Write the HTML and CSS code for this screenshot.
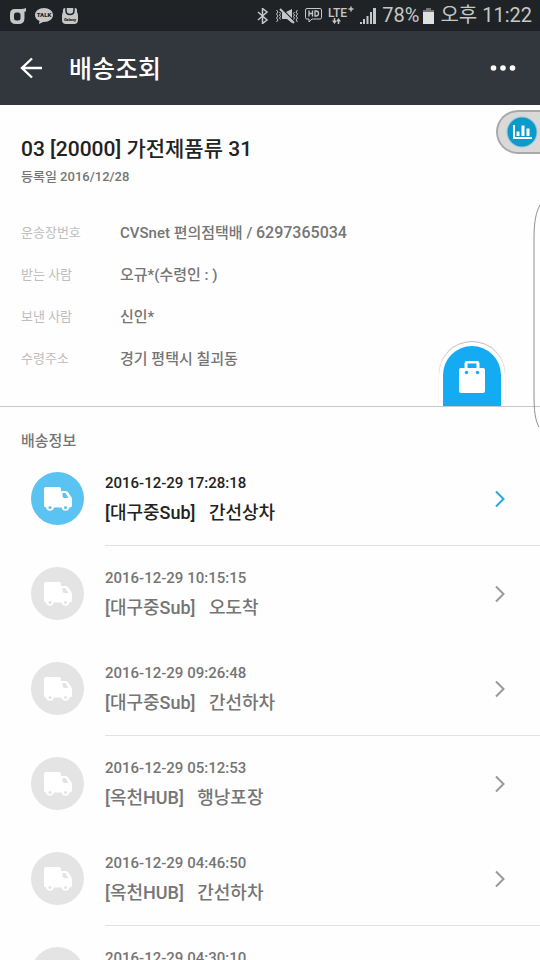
FILE: index.html
```
<!DOCTYPE html>
<html lang="ko">
<head>
<meta charset="utf-8">
<meta name="viewport" content="width=device-width, initial-scale=1">
<title>배송조회</title>
<link rel="stylesheet" href="styles.css">
</head>
<body>
<svg class="defs" aria-hidden="true">
  <symbol id="truck" viewBox="0 0 28 24">
    <path fill="currentColor" d="M2 0h13q2 0 2 2v2h4.500q1.500 0 2.500 1.200l3 4.300q1 1.500 1 3V18q0 2.500-2.500 2.500H2.500Q0 20.500 0 18V2q0-2 2-2z"/>
    <path class="truck-cut" d="M18.500 6h3l3 5h-4q-2 0-2-2z"/>
    <circle cx="6" cy="20" r="3.800" fill="currentColor"/>
    <circle cx="21.500" cy="20" r="3.800" fill="currentColor"/>
    <circle class="truck-cut" cx="6" cy="20.500" r="1.500"/>
    <circle class="truck-cut" cx="21.500" cy="20.500" r="1.500"/>
  </symbol>
  <symbol id="chevron" viewBox="0 0 12 18">
    <path d="M2 1.500l7.500 7.500L2 16.500" fill="none" stroke="currentColor" stroke-width="2"/>
  </symbol>
</svg>

<div class="status">
  <div class="status-group">
    <svg width="16" height="16" viewBox="0 0 16 16"><path d="M16 0v3.500h-1.500V10q0 6-6 6H6q-6 0-6-6V6q0-5 5-5h6q3 0 5-1zM6.500 4.500Q4 4.500 4 7v3q0 2.500 2.500 2.500H8q2.500 0 2.500-2.500V7q0-2.500-2.500-2.500z" fill="#c6c8c8" fill-rule="evenodd"/></svg>
    <svg width="18" height="16" viewBox="0 0 18 16"><path d="M9 0c5 0 9 3 9 7s-4 7-9 7l-1-.1L4 16l.5-3C2 12 0 9.700 0 7c0-4 4-7 9-7z" fill="#c6c8c8"/><text x="9" y="9" class="talk">TALK</text></svg>
    <svg width="16" height="16" viewBox="0 0 16 16"><path d="M3 0h10q2 0 2 2v2q1 1.500 1 4v4q0 4-4 4H4q-4 0-4-4V8q0-2.500 1-4V2q0-2 2-2z" fill="#c6c8c8"/><path d="M4 0v2.500q0 4 4 4t4-4V0" fill="none" stroke="#1f2325" stroke-width="1.500"/><text x="8" y="13" class="shop">Galaxy</text></svg>
  </div>
  <div class="status-group status-right">
    <svg width="12" height="16" viewBox="0 0 12 16"><path d="M1 4l9 8-4.500 3.500v-15L10 4l-9 8" fill="none" stroke="#c6c8c8" stroke-width="1.500"/></svg>
    <svg width="24" height="16" viewBox="0 0 24 16"><g fill="none" stroke="#c6c8c8"><path d="M1.500 2l1.500 2-1.500 2L3 8l-1.500 2L3 12l-1.500 2M22.500 2L21 4l1.500 2L21 8l1.500 2-1.500 2 1.500 2M4.500 4l1 1.500-1 1.500 1 1.500-1 1.500 1 1.500M19.500 4l-1 1.500 1 1.500-1 1.500 1 1.500-1 1.500"/><path d="M5 1l14 14" stroke-width="2"/></g><path d="M7 5h3l7 7v3l-5-4H7zM11 4l6-3v9z" fill="#c6c8c8"/></svg>
    <svg width="17" height="15" viewBox="0 0 17 15"><path d="M2 .5h13q1.500 0 1.500 1.500v7.500q0 1.500-1.500 1.500H7L4 14v-3H2Q.5 11 .5 9.500V2Q.5.5 2 .5z" fill="none" stroke="#c6c8c8"/><path d="M4 2.500v6M7.500 2.500v6M4 5.500h3.500M10 3v5h1q2.500 0 2.500-2.500T11 3z" fill="none" stroke="#c6c8c8" stroke-width="1.300"/></svg>
    <svg class="lte" width="26" height="19" viewBox="0 0 26 19"><text x="0" y="11" class="lte-text">LTE</text><path d="M20.500 3h5M23 .5v5" stroke="#c6c8c8" stroke-width="1.400"/><path d="M6.500 12v4M10.500 18v-4" stroke="#c6c8c8" stroke-width="1.500"/><path d="M4 14.500h5L6.500 18zM8 15.500h5L10.500 12z" fill="#c6c8c8"/></svg>
    <svg width="16" height="16" viewBox="0 0 16 16"><path d="M0 14h2v2H0zM3 11h2v5H3zM6.500 8h2v8h-2zM10 4h2v12h-2zM13 0h3v16h-3z" fill="#c6c8c8"/></svg>
    <span>78%</span>
    <svg class="battery" width="11" height="16" viewBox="0 0 11 16"><path d="M3 0h5v2h3v2H0V2h3z" fill="#747777"/><path d="M0 4h11v12H0z" fill="#dfe1e1"/></svg>
    <span>오후 11:22</span>
  </div>
</div>

<header class="bar">
  <button class="icon-button" type="button" aria-label="뒤로"><svg width="22" height="22" viewBox="0 0 22 22"><path d="M12 1.500L2 11l10 9.500M2 11h20" fill="none" stroke="#fff" stroke-width="2.400"/></svg></button>
  <h1>배송조회</h1>
  <button class="icon-button" type="button" aria-label="더보기"><svg width="26" height="6" viewBox="0 0 26 6"><g fill="#fff"><circle cx="3.500" cy="3" r="2.800"/><circle cx="13" cy="3" r="2.800"/><circle cx="22.500" cy="3" r="2.800"/></g></svg></button>
</header>

<main>
  <section class="parcel">
    <h2>03 [20000] 가전제품류 31</h2>
    <p class="registered">등록일 2016/12/28</p>
    <dl>
      <dt>운송장번호</dt><dd>CVSnet 편의점택배 / <span class="number">6297365034</span></dd>
      <dt>받는 사람</dt><dd>오규*(수령인 : )</dd>
      <dt>보낸 사람</dt><dd>신인*</dd>
      <dt>수령주소</dt><dd>경기 평택시 칠괴동</dd>
    </dl>
    <button class="bag" type="button" aria-label="쇼핑"><svg width="26" height="32" viewBox="0 0 26 32"><path d="M7 8V3q0-2 2-2h8q2 0 2 2v5" fill="none" stroke="#fff" stroke-width="3"/><rect x="0" y="7" width="26" height="25" rx="2" fill="#fff"/><circle cx="7.500" cy="11.500" r="1.700" fill="#14abf3"/><circle cx="18.500" cy="11.500" r="1.700" fill="#14abf3"/></svg></button>
    <button class="edge-pill" type="button" aria-label="통계"><svg width="32" height="32" viewBox="0 0 32 32"><circle cx="16" cy="16" r="15.500" fill="#9fc4d3"/><circle cx="16" cy="16" r="14.500" fill="#0b9bcb"/><path d="M8 9v13h18" fill="none" stroke="#fff" stroke-width="2"/><path d="M10.500 15.500h3V20h-3zM15.500 9.500h3V20h-3zM20.500 12.500h3V20h-3z" fill="#fff"/></svg></button>
    <svg class="edge-panel" width="7" height="224" viewBox="0 0 7 224"><path d="M7 1C3 8 1 18 1 34v156c0 16 1 26 5 33" fill="none" stroke="#909090"/></svg>
  </section>

  <section class="tracking">
    <h3>배송정보</h3>
    <ul>
      <li><a class="step current" href="#"><span class="mark"><svg width="28" height="24"><use href="#truck"/></svg></span><span class="info"><time>2016-12-29 17:28:18</time><span class="place">[대구중Sub]   간선상차</span></span><svg class="go" width="12" height="18"><use href="#chevron"/></svg></a></li>
      <li><a class="step" href="#"><span class="mark"><svg width="28" height="24"><use href="#truck"/></svg></span><span class="info"><time>2016-12-29 10:15:15</time><span class="place">[대구중Sub]   오도착</span></span><svg class="go" width="12" height="18"><use href="#chevron"/></svg></a></li>
      <li><a class="step" href="#"><span class="mark"><svg width="28" height="24"><use href="#truck"/></svg></span><span class="info"><time>2016-12-29 09:26:48</time><span class="place">[대구중Sub]   간선하차</span></span><svg class="go" width="12" height="18"><use href="#chevron"/></svg></a></li>
      <li><a class="step" href="#"><span class="mark"><svg width="28" height="24"><use href="#truck"/></svg></span><span class="info"><time>2016-12-29 05:12:53</time><span class="place">[옥천HUB]   행낭포장</span></span><svg class="go" width="12" height="18"><use href="#chevron"/></svg></a></li>
      <li><a class="step" href="#"><span class="mark"><svg width="28" height="24"><use href="#truck"/></svg></span><span class="info"><time>2016-12-29 04:46:50</time><span class="place">[옥천HUB]   간선하차</span></span><svg class="go" width="12" height="18"><use href="#chevron"/></svg></a></li>
      <li><a class="step" href="#"><span class="mark"><svg width="28" height="24"><use href="#truck"/></svg></span><span class="info"><time>2016-12-29 04:30:10</time></span></a></li>
    </ul>
  </section>
</main>
</body>
</html>
```
FILE: styles.css
```
* { box-sizing: border-box; }
body {
  margin: 0;
  height: 100vh;
  display: flex;
  flex-direction: column;
  overflow: hidden;
  background: #fefefe;
  color: #757575;
  font-family: Roboto, "Noto Sans CJK KR", sans-serif;
  font-weight: 500;
}
h1, h2, h3, p, dl, dd, ul { margin: 0; padding: 0; font-weight: 500; }
ul { list-style: none; }
button { border: 0; padding: 0; background: none; cursor: pointer; }
svg { display: block; flex: none; }
.defs { position: absolute; width: 0; height: 0; }

.status {
  flex: none;
  display: flex;
  justify-content: space-between;
  align-items: center;
  padding: 0 8px 0 10px;
  line-height: 31px;
  background: #1f2325;
  color: #c6c8c8;
  font-size: 20px;
  font-weight: 400;
  white-space: nowrap;
}
.status-group { display: flex; align-items: center; gap: 9px; }
.status-right { gap: 6px; }
.status-right .battery { margin-left: -2px; }
.talk, .shop { fill: #1f2325; font-weight: 900; text-anchor: middle; }
.talk { font-size: 6px; }
.shop { font-size: 4px; }
.lte-text { fill: #c6c8c8; font-size: 12px; font-weight: 500; }

.bar {
  flex: none;
  display: flex;
  align-items: center;
  height: 74px;
  padding: 0 24px 0 20px;
  background: #31373d;
  color: #fff;
}
.bar h1 { flex: 1; margin-left: 27px; padding-top: 4px; font-size: 25px; line-height: 36px; }

main { flex: 1; min-height: 0; overflow-y: auto; scrollbar-width: none; }
.parcel {
  position: relative;
  padding: 29px 21px 28px;
  border-bottom: 1px solid #c8c8c8;
}
.parcel h2 { color: #222; font-size: 21px; line-height: 30px; }
.registered { font-size: 13px; line-height: 26px; }
.parcel dl {
  display: grid;
  grid-template-columns: 99px 1fr;
  grid-auto-rows: 42px;
  align-items: center;
  margin-top: 20px;
}
.parcel dt { color: #bdbdbd; font-size: 13px; font-weight: 400; }
.parcel dd { font-size: 15px; }
.number { font-size: 16px; }
.bag {
  position: absolute;
  right: 35px;
  bottom: 0;
  width: 66px;
  height: 64px;
  padding-top: 1px;
  display: grid;
  place-items: center;
  border: 4px solid #fff;
  border-bottom: 0;
  border-radius: 33px 33px 0 0;
  background: #14abf3;
  box-shadow: 0 -1px 1px 0 #bbb;
  clip-path: inset(-4px -4px 0 -4px);
}
.edge-pill {
  position: absolute;
  top: 5px;
  right: -2px;
  width: 46px;
  height: 44px;
  padding-left: 8px;
  border: 2px solid #a9a9a9;
  border-right: 0;
  border-radius: 22px 0 0 22px;
  background: #d9d9d9;
}
.edge-panel { position: absolute; right: 0; top: 99px; z-index: 1; }

.tracking h3 { padding: 24px 21px 0; font-size: 15px; line-height: 20px; }
.step {
  position: relative;
  display: flex;
  align-items: center;
  height: 95px;
  padding-left: 31px;
  color: inherit;
  text-decoration: none;
}
.mark {
  --disc: #e4e4e4;
  display: grid;
  place-items: center;
  width: 53px;
  height: 53px;
  border-radius: 50%;
  background: var(--disc);
  color: #fff;
}
.truck-cut { fill: var(--disc); }
.info {
  flex: 1;
  align-self: stretch;
  display: flex;
  flex-direction: column;
  margin-left: 21px;
  padding-top: 20px;
}
li:nth-child(odd) .info { border-bottom: 1px solid #e2e2e2; }
.info time { font-size: 15px; line-height: 24px; }
.place { font-size: 18px; line-height: 36px; white-space: pre; }
.go { position: absolute; right: 34px; color: #999; }
.current { color: #222; }
.current .mark { --disc: #5bc3f1; }
.current .go { color: #29a7e0; }
```
